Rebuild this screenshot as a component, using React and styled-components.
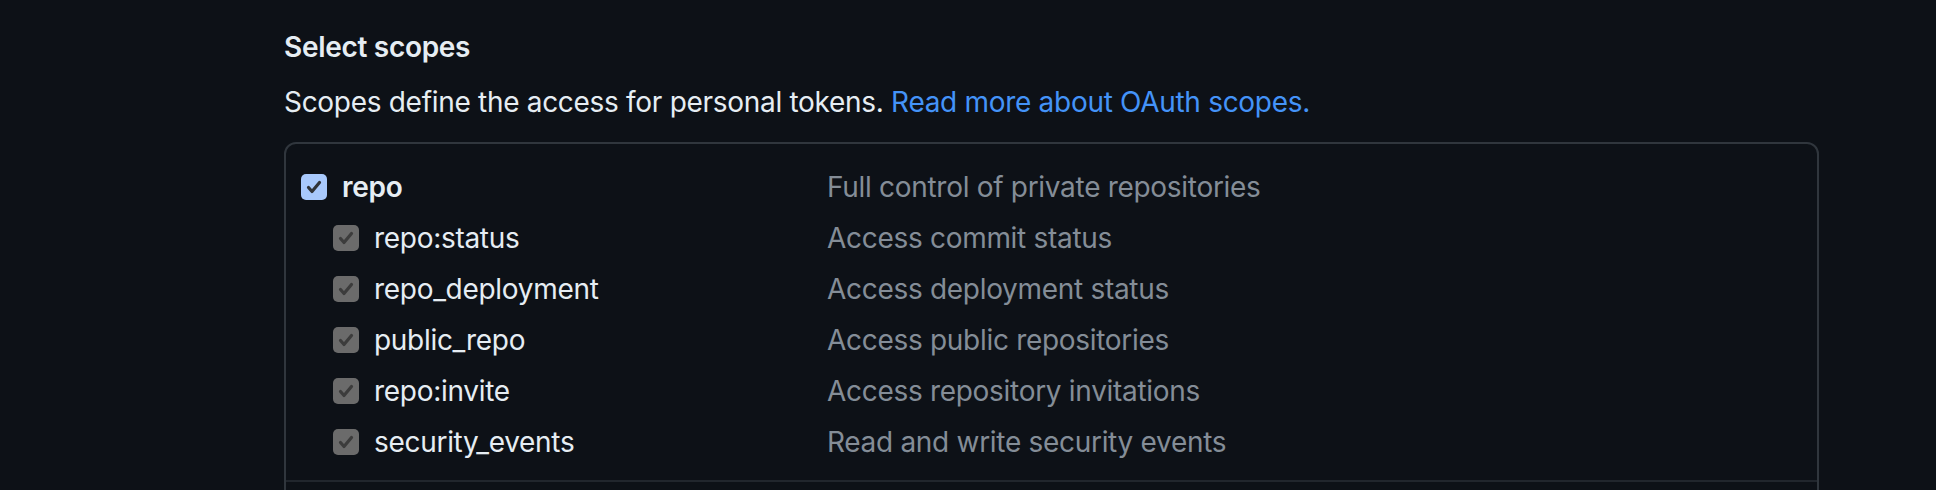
import React from "react";
import styled, { createGlobalStyle } from "styled-components";

const GlobalStyle = createGlobalStyle`
  html, body {
    margin: 0;
    padding: 0;
    background: #0d1117;
  }
  body {
    font-family: Inter, "Noto Sans", sans-serif;
    color: #e6edf3;
    letter-spacing: -0.3px;
    -webkit-font-smoothing: antialiased;
  }
`;

const scopes = [
  { name: "repo", desc: "Full control of private repositories", parent: true },
  { name: "repo:status", desc: "Access commit status" },
  { name: "repo_deployment", desc: "Access deployment status" },
  { name: "public_repo", desc: "Access public repositories" },
  { name: "repo:invite", desc: "Access repository invitations" },
  { name: "security_events", desc: "Read and write security events" },
];

const Check = ({ parent }) => (
  <CheckBox $parent={parent}>
    <svg width="26" height="26" viewBox="0 0 26 26">
      <path
        d="M7.5 13.5 L11 17.5 L18.5 8.5"
        fill="none"
        stroke={parent ? "#2f3338" : "#3c3c3c"}
        strokeWidth="3.2"
        strokeLinecap="round"
        strokeLinejoin="round"
      />
    </svg>
  </CheckBox>
);

const App = () => {
  return (
    <>
      <GlobalStyle />
      <Page>
        <Title>Select scopes</Title>
        <Note>
          Scopes define the access for personal tokens.{" "}
          <Link href="#">Read more about OAuth scopes.</Link>
        </Note>
        <ScopeBox>
          <Group>
            {scopes.map((s) => (
              <Row key={s.name}>
                <NameCell $child={!s.parent}>
                  <Check parent={s.parent} />
                  <Name $bold={s.parent}>{s.name}</Name>
                </NameCell>
                <Desc>{s.desc}</Desc>
              </Row>
            ))}
          </Group>
          <NextGroup />
        </ScopeBox>
      </Page>
    </>
  );
};

export default App;

const Page = styled.main`
  padding: 26px 117px 0 284px;
`;

const Title = styled.h3`
  margin: 0;
  font-size: 28px;
  line-height: 42px;
  font-weight: 600;
  color: #e6edf3;
`;

const Note = styled.p`
  margin: 13px 0 0;
  font-size: 28px;
  line-height: 42px;
  color: #e6edf3;
`;

const Link = styled.a`
  color: #4493f8;
  text-decoration: none;
`;

const ScopeBox = styled.div`
  margin-top: 19px;
  border: 2px solid #30363d;
  border-radius: 12px;
`;

const Group = styled.div`
  padding: 17px 15px 13px;
`;

const NextGroup = styled.div`
  height: 60px;
  border-top: 2px solid #21262d;
`;

const Row = styled.div`
  display: grid;
  grid-template-columns: 526px 1fr;
  align-items: center;
  height: 51px;
`;

const NameCell = styled.div`
  display: flex;
  align-items: center;
  gap: 15px;
  padding-left: ${(p) => (p.$child ? "32px" : "0")};
`;

const CheckBox = styled.span`
  display: flex;
  width: 26px;
  height: 26px;
  border-radius: 5px;
  background: ${(p) => (p.$parent ? "#a8c9fc" : "#6b6b6b")};
  flex-shrink: 0;
`;

const Name = styled.span`
  font-size: 28px;
  line-height: 42px;
  font-weight: ${(p) => (p.$bold ? 600 : 400)};
  color: #e6edf3;
`;

const Desc = styled.span`
  font-size: 28px;
  line-height: 42px;
  color: #848d97;
`;
